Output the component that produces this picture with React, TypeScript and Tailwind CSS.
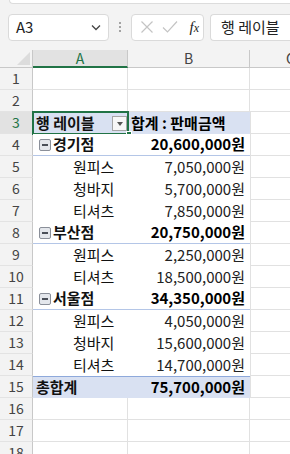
import React from 'react';

const font = { fontFamily: '"Noto Sans CJK KR", "Noto Sans", sans-serif' };

type Row = {
  n: number;
  a?: string;
  b?: string;
  kind: 'empty' | 'head' | 'sub' | 'item' | 'total' | 'plain';
};

const rows: Row[] = [
  { n: 1, kind: 'empty' },
  { n: 2, kind: 'empty' },
  { n: 3, a: '행 레이블', b: '합계 : 판매금액', kind: 'head' },
  { n: 4, a: '경기점', b: '20,600,000원', kind: 'sub' },
  { n: 5, a: '원피스', b: '7,050,000원', kind: 'item' },
  { n: 6, a: '청바지', b: '5,700,000원', kind: 'item' },
  { n: 7, a: '티셔츠', b: '7,850,000원', kind: 'item' },
  { n: 8, a: '부산점', b: '20,750,000원', kind: 'sub' },
  { n: 9, a: '원피스', b: '2,250,000원', kind: 'item' },
  { n: 10, a: '티셔츠', b: '18,500,000원', kind: 'item' },
  { n: 11, a: '서울점', b: '34,350,000원', kind: 'sub' },
  { n: 12, a: '원피스', b: '4,050,000원', kind: 'item' },
  { n: 13, a: '청바지', b: '15,600,000원', kind: 'item' },
  { n: 14, a: '티셔츠', b: '14,700,000원', kind: 'item' },
  { n: 15, a: '총합계', b: '75,700,000원', kind: 'total' },
  { n: 16, kind: 'plain' },
  { n: 17, kind: 'plain' },
  { n: 18, kind: 'plain' },
];

function Collapse() {
  return (
    <span className="w-[12px] h-[12px] mr-[2px] mb-[3px] border border-[#8a8f99] rounded-[2px] bg-[#e4e7ec] flex items-center justify-center shrink-0">
      <span className="w-[6px] h-[1.5px] bg-[#4a4f58]" />
    </span>
  );
}

function SheetRow({ r }: { r: Row }) {
  const inPivot = r.kind !== 'empty' && r.kind !== 'plain';
  const fill = r.kind === 'head' || r.kind === 'total' ? 'bg-[#d9e1f2]' : 'bg-white';
  const subLine = r.kind === 'sub' ? 'border-b border-[#b4c6e7]' : '';
  const totalLine = r.kind === 'total' ? 'border-t border-[#8ea9db]' : '';
  const bold = r.kind === 'head' || r.kind === 'sub' || r.kind === 'total';

  return (
    <div className="flex h-[22px] shrink-0">
      <div
        className={`w-[33px] shrink-0 flex items-center justify-center text-[14px] border-r border-[#c8c8c8] border-b border-b-[#e3e3e3] ${
          r.n === 3 ? 'bg-[#e2e2e2] text-[#217346]' : 'bg-[#f3f3f3] text-[#444]'
        }`}
      >
        {r.n}
      </div>

      {inPivot ? (
        <div className={`relative flex w-[217px] shrink-0 ${fill} ${subLine} ${totalLine}`}>
          <div className={`w-[95px] shrink-0 flex items-end pb-[1px] text-[15px] text-[#111] ${bold ? 'font-bold' : ''} ${r.kind === 'item' ? 'pl-[40px]' : r.kind === 'sub' ? 'pl-[6px]' : 'pl-[3px]'}`}>
            {r.kind === 'sub' && <Collapse />}
            <span className="leading-[20px]">{r.a}</span>
          </div>
          <div className={`flex-1 flex items-end text-[15px] pb-[1px] ${r.kind === 'head' ? 'justify-start pl-[3px]' : 'justify-end pr-[5px]'} ${bold ? 'font-bold text-black' : 'text-[#222]'}`}>
            <span className="leading-[20px] whitespace-nowrap">{r.b}</span>
          </div>
          {r.kind === 'head' && (
            <>
              <div className="absolute left-[79px] top-[4px] w-[15px] h-[15px] bg-[#f7f7f7] border border-[#a6a6a6] flex items-center justify-center">
                <span className="w-0 h-0 border-l-[3.5px] border-r-[3.5px] border-t-[4px] border-l-transparent border-r-transparent border-t-[#555]" />
              </div>
              <div className="absolute -left-[1px] -top-[1px] w-[97px] h-[24px] border-2 border-[#217346]" />
              <div className="absolute left-[93px] top-[19px] w-[6px] h-[6px] bg-[#217346] border border-white" />
            </>
          )}
        </div>
      ) : (
        <>
          <div className="w-[95px] shrink-0 bg-white border-r border-b border-[#e1e1e1]" />
          <div className="w-[122px] shrink-0 bg-white border-r border-b border-[#e1e1e1]" />
        </>
      )}
      <div className={`flex-1 bg-white border-b border-[#e1e1e1] ${inPivot ? 'border-l border-l-[#e1e1e1]' : ''}`} />
    </div>
  );
}

export default function App() {
  return (
    <div className="w-[290px] h-[454px] overflow-hidden bg-[#f3f3f3] flex flex-col text-[#222]" style={font}>
      <div className="h-[4px] ml-[9px] bg-white border border-t-0 border-r-0 border-[#dcdcdc] rounded-bl-[6px] shrink-0" />

      <div className="flex items-center h-[46px] shrink-0 pl-[8px]">
        <div className="w-[101px] h-[27px] bg-white border border-[#dadada] rounded-[4px] flex items-center justify-between pl-[7px] pr-[6px]">
          <span className="text-[15px] text-[#222]">A3</span>
          <svg width="12" height="12" viewBox="0 0 12 12" fill="none" stroke="#444" strokeWidth="1.3">
            <path d="M2 4.5l4 4 4-4" />
          </svg>
        </div>
        <div className="w-[22px] flex flex-col items-center gap-[2px]">
          <span className="w-[2px] h-[2px] bg-[#888] rounded-full" />
          <span className="w-[2px] h-[2px] bg-[#888] rounded-full" />
          <span className="w-[2px] h-[2px] bg-[#888] rounded-full" />
        </div>
        <div className="w-[73px] h-[27px] bg-white border border-[#dadada] rounded-[4px] flex items-center pl-[8px] pr-[4px] gap-[8px]">
          <svg width="14" height="14" viewBox="0 0 14 14" fill="none" stroke="#c4c4c4" strokeWidth="1.2">
            <path d="M1.5 1.5l11 11M12.5 1.5l-11 11" />
          </svg>
          <svg width="16" height="14" viewBox="0 0 16 14" fill="none" stroke="#c4c4c4" strokeWidth="1.2">
            <path d="M1 7.5l4.5 4.5L15 1.5" />
          </svg>
          <span className="text-[15px] italic text-[#222] ml-auto" style={{ fontFamily: '"Liberation Serif", serif' }}>
            f<span className="text-[12px]">x</span>
          </span>
        </div>
        <div className="ml-[6px] flex-1 h-[27px] bg-white border border-[#dadada] border-r-0 rounded-l-[4px] flex items-center pl-[10px]">
          <span className="text-[15px] whitespace-nowrap text-[#222]">행 레이블</span>
        </div>
      </div>

      <div className="flex h-[18px] shrink-0 bg-[#f3f3f3]">
        <div className="w-[33px] shrink-0 relative border-r border-b border-[#c8c8c8]">
          <svg className="absolute right-[2px] bottom-[2px]" width="13" height="13" viewBox="0 0 13 13">
            <path d="M13 0V13H0Z" fill="#dcdcdc" />
          </svg>
        </div>
        <div className="w-[95px] shrink-0 bg-[#e2e2e2] border-r border-[#c8c8c8] border-b-2 border-b-[#217346] flex items-center justify-center text-[14px] text-[#217346]">
          A
        </div>
        <div className="w-[122px] shrink-0 border-r border-b border-[#c8c8c8] flex items-center justify-center text-[14px] text-[#444]">
          B
        </div>
        <div className="flex-1 border-b border-[#c8c8c8] flex items-center justify-end text-[14px] text-[#444]">
          <span className="translate-x-[5px]">C</span>
        </div>
      </div>

      <div className="flex flex-col">
        {rows.map((r) => (
          <SheetRow key={r.n} r={r} />
        ))}
      </div>
    </div>
  );
}
